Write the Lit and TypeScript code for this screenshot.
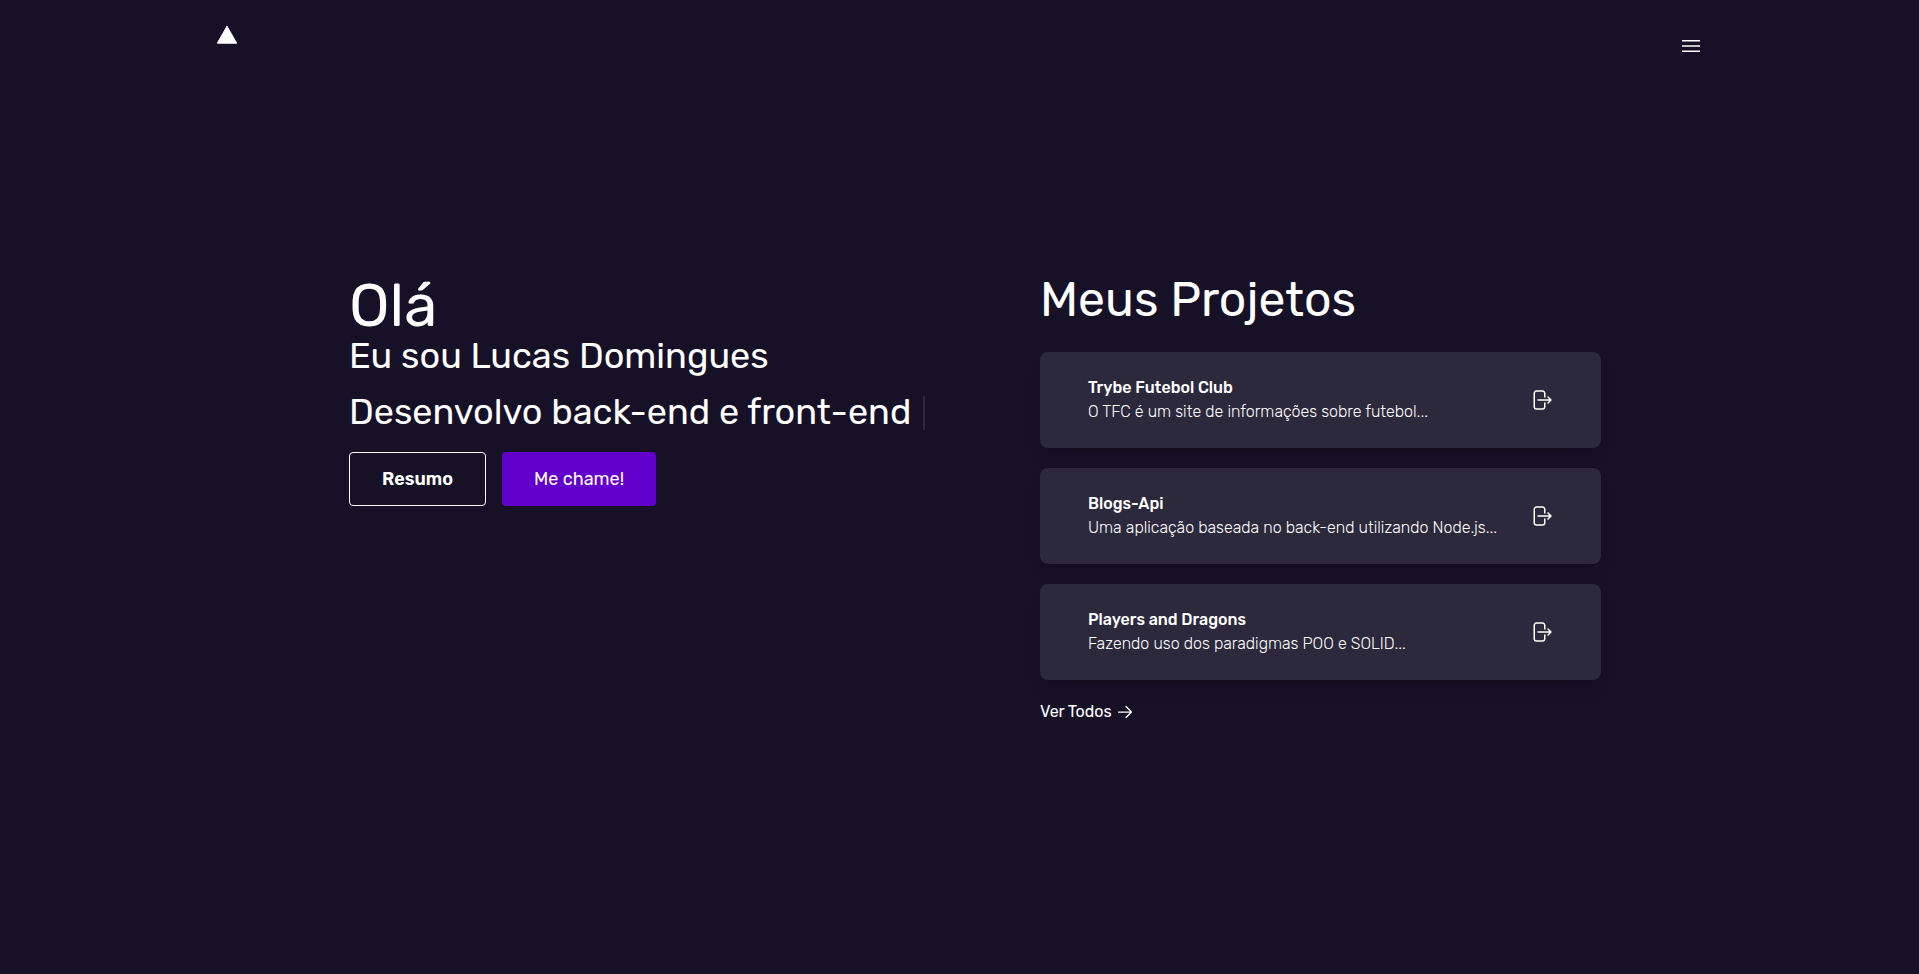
import { LitElement, html, css } from "lit";
import { customElement, property } from "lit/decorators.js";

interface Project {
  title: string;
  description: string;
}

const projects: Project[] = [
  { title: "Trybe Futebol Club", description: "O TFC é um site de informações sobre futebol..." },
  { title: "Blogs-Api", description: "Uma aplicação baseada no back-end utilizando Node.js..." },
  { title: "Players and Dragons", description: "Fazendo uso dos paradigmas POO e SOLID..." },
];

@customElement("project-card")
export class ProjectCard extends LitElement {
  @property({ attribute: false }) project!: Project;

  static styles = css`
    :host {
      display: block;
    }
    .card {
      display: flex;
      align-items: center;
      justify-content: space-between;
      gap: 24px;
      box-sizing: border-box;
      padding: 24px 48px;
      border-radius: 8px;
      background: #2d293d;
      box-shadow: 0 10px 15px -3px rgba(0, 0, 0, 0.1), 0 4px 6px -4px rgba(0, 0, 0, 0.1);
      color: #fff;
      font-size: 16px;
      line-height: 24px;
    }
    .title {
      margin: 0;
      font-size: 16px;
      font-weight: 500;
    }
    .description {
      margin: 0;
      color: #fff;
      font-weight: 300;
    }
    .open {
      display: flex;
      color: #fff;
    }
    .icon {
      width: 24px;
      height: 24px;
    }
  `;

  render() {
    return html`
      <article class="card">
        <div>
          <h3 class="title">${this.project.title}</h3>
          <p class="description">${this.project.description}</p>
        </div>
        <a class="open" href="#projeto" aria-label=${`Abrir ${this.project.title}`}>
          <svg class="icon" viewBox="0 0 24 24" fill="none" stroke="currentColor" stroke-width="1.5"
            stroke-linecap="round" stroke-linejoin="round">
            <path d="M15.75 9V5.25A2.25 2.25 0 0 0 13.5 3h-6a2.25 2.25 0 0 0-2.25 2.25v13.5A2.25 2.25 0 0 0 7.5 21h6a2.25 2.25 0 0 0 2.25-2.25V15" />
            <path d="M9 12h13m0 0-3-3m3 3-3 3" />
          </svg>
        </a>
      </article>
    `;
  }
}

@customElement("app-root")
export class AppRoot extends LitElement {
  static styles = css`
    :host {
      display: flex;
      flex-direction: column;
      min-height: 100vh;
      background: #171127;
      color: #fff;
      font-family: Rubik, Inter, sans-serif;
      font-size: 16px;
      line-height: 24px;
    }
    .header {
      display: flex;
      align-items: flex-start;
      justify-content: space-between;
      box-sizing: border-box;
      width: 100%;
      max-width: 1537px;
      margin: 0 auto;
      padding: 24px 25px 24px 24px;
    }
    .logo {
      display: flex;
      color: #fff;
    }
    .logo-mark {
      width: 24px;
      height: 24px;
    }
    .menu {
      display: flex;
      margin: 10px 0 0;
      padding: 0;
      border: 0;
      background: none;
      color: #fff;
      cursor: pointer;
    }
    .icon {
      width: 24px;
      height: 24px;
    }
    .main {
      display: grid;
      grid-template-columns: minmax(0, 1fr) minmax(0, 561px);
      gap: 64px;
      align-items: start;
      box-sizing: border-box;
      width: 100%;
      max-width: 1537px;
      margin: 0 auto;
      padding: 190px 127px 48px 158px;
    }
    .hello {
      margin: 12px 0 0;
      font-size: 60px;
      font-weight: 400;
      line-height: 44px;
    }
    .line {
      margin: 0;
      font-size: 36px;
      font-weight: 400;
      line-height: 56px;
    }
    .cursor {
      display: inline-block;
      width: 2px;
      height: 34px;
      margin-left: 12px;
      background: #2d293d;
      vertical-align: -6px;
    }
    .actions {
      display: flex;
      gap: 16px;
      margin-top: 12px;
    }
    .button {
      box-sizing: border-box;
      height: 54px;
      padding: 0 32px;
      border: 1px solid #fff;
      border-radius: 4px;
      background: transparent;
      color: #fff;
      font-family: inherit;
      font-size: 18px;
      font-weight: 600;
      line-height: 28px;
      cursor: pointer;
    }
    .primary {
      border: 0;
      background: #6200cc;
      font-weight: 400;
    }
    .heading {
      margin: 0 0 24px;
      font-size: 48px;
      font-weight: 400;
      line-height: 56px;
    }
    .cards {
      display: grid;
      gap: 20px;
    }
    .all {
      display: inline-flex;
      align-items: center;
      gap: 5px;
      margin-top: 20px;
      color: #fff;
      text-decoration: none;
    }
    .arrow {
      width: 16px;
      height: 16px;
    }
    @media (max-width: 1200px) {
      .main {
        grid-template-columns: minmax(0, 1fr);
        padding: 64px 24px 48px;
      }
    }
  `;

  render() {
    return html`
      <header class="header">
        <a class="logo" href="#inicio" aria-label="Início">
          <svg class="logo-mark" viewBox="0 0 24 24" fill="currentColor">
            <path d="M12 2.2 2.3 19.2h19.4z" stroke="currentColor" stroke-width="1" stroke-linejoin="round" />
          </svg>
        </a>
        <button class="menu" type="button" aria-label="Menu">
          <svg class="icon" viewBox="0 0 24 24" fill="none" stroke="currentColor" stroke-width="1.5">
            <path d="M3 6.75h18M3 12h18M3 17.25h18" />
          </svg>
        </button>
      </header>
      <main class="main">
        <section>
          <h1 class="hello">Olá</h1>
          <p class="line">Eu sou Lucas Domingues</p>
          <p class="line">Desenvolvo back-end e front-end<span class="cursor"></span></p>
          <div class="actions">
            <button class="button" type="button">Resumo</button>
            <button class="button primary" type="button">Me chame!</button>
          </div>
        </section>
        <section>
          <h2 class="heading">Meus Projetos</h2>
          <div class="cards">
            ${projects.map((project) => html`<project-card .project=${project}></project-card>`)}
          </div>
          <a class="all" href="#projetos">
            Ver Todos
            <svg class="arrow" viewBox="0 0 16 16" fill="none" stroke="currentColor" stroke-width="1.25"
              stroke-linecap="round" stroke-linejoin="round">
              <path d="M1.5 8h13M9 2.5 14.5 8 9 13.5" />
            </svg>
          </a>
        </section>
      </main>
    `;
  }
}
